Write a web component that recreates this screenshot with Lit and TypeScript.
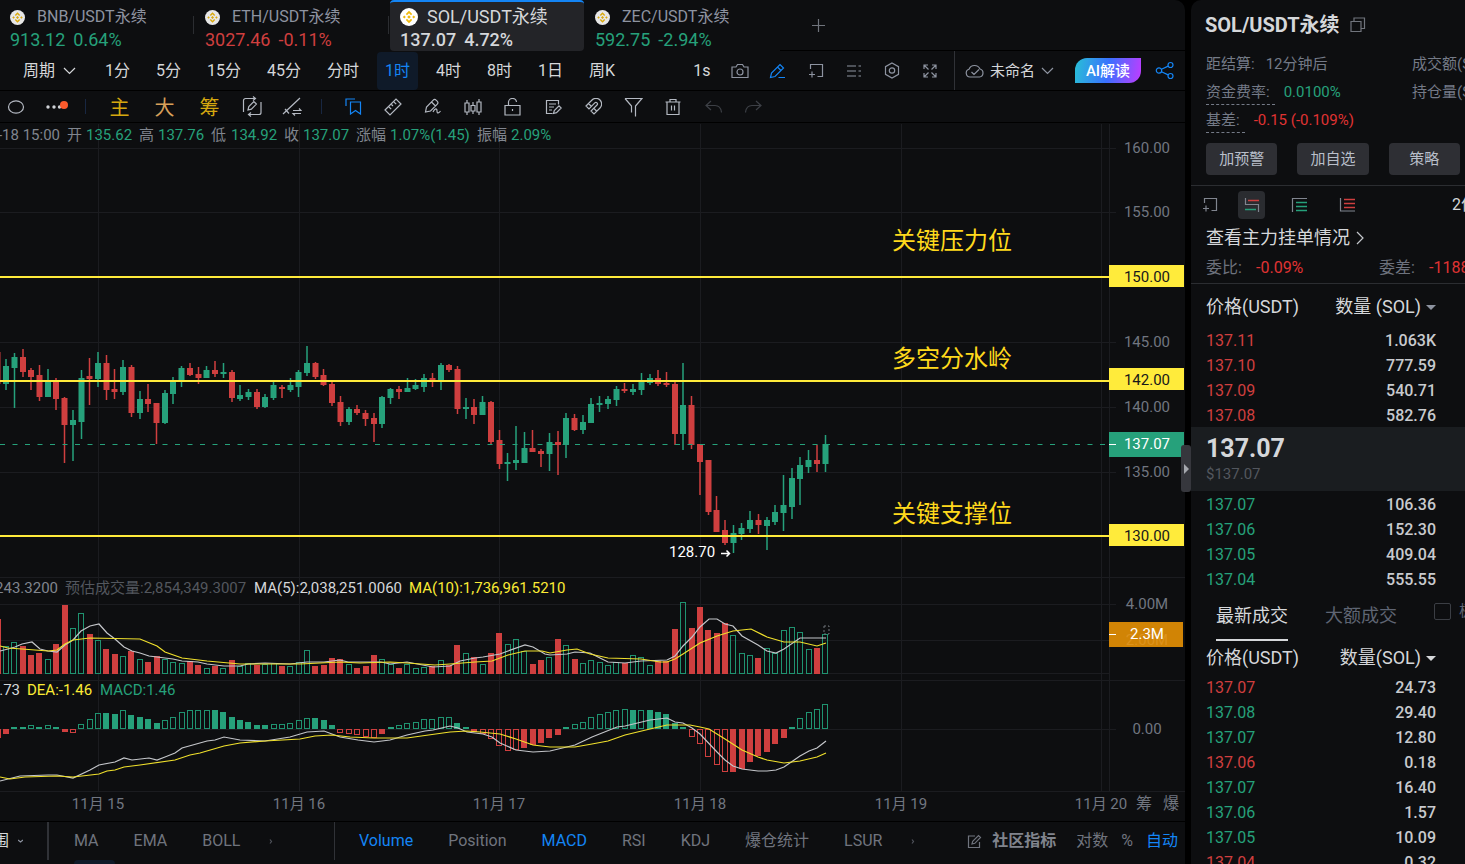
import { LitElement, html, svg, css, type SVGTemplateResult } from "lit";
import { customElement, state } from "lit/decorators.js";
import { classMap } from "lit/directives/class-map.js";

/* ---------- chart data: vertical positions inside the 698px tall canvas, offset by TOP ---------- */

const TOP = 123;
const STEP = 8.36;
const FIRST = -12;
const xOf = (i: number) => 98 + (i + FIRST) * STEP;

// direction, high, body top, body bottom, low
type Candle = ["r" | "g", number, number, number, number];
const CANDLES: Candle[] = [
  ["r", 351, 352, 384, 384], ["g", 359, 366, 384, 390], ["g", 353, 357, 368, 408], ["r", 349, 357, 372, 377],
  ["r", 368, 370, 377, 390], ["r", 365, 375, 397, 401], ["g", 369, 381, 397, 397], ["r", 378, 381, 399, 410],
  ["r", 397, 398, 425, 463], ["g", 410, 420, 425, 461], ["g", 370, 378, 422, 439], ["r", 358, 376, 379, 405],
  ["g", 352, 363, 379, 387], ["r", 355, 363, 390, 400], ["r", 369, 389, 392, 399], ["g", 360, 367, 392, 395],
  ["r", 365, 367, 413, 417], ["g", 391, 399, 413, 419], ["r", 384, 399, 404, 412], ["r", 403, 403, 423, 444],
  ["g", 390, 393, 423, 424], ["g", 377, 381, 394, 404], ["g", 366, 368, 381, 387], ["r", 363, 368, 375, 376],
  ["r", 367, 374, 378, 384], ["g", 366, 370, 378, 378], ["r", 361, 370, 374, 377], ["g", 363, 372, 374, 378],
  ["r", 370, 372, 398, 402], ["g", 385, 395, 399, 401], ["g", 389, 392, 397, 400], ["r", 389, 392, 407, 409],
  ["g", 394, 397, 407, 408], ["g", 381, 385, 398, 400], ["r", 385, 387, 389, 398], ["g", 378, 385, 390, 392],
  ["g", 370, 372, 387, 397], ["g", 346, 363, 373, 376], ["r", 362, 363, 377, 379], ["r", 369, 375, 385, 386],
  ["r", 381, 384, 403, 406], ["r", 396, 402, 422, 426], ["g", 407, 409, 422, 425], ["r", 405, 409, 413, 415],
  ["r", 410, 413, 419, 426], ["r", 413, 418, 424, 442], ["g", 396, 397, 424, 428], ["g", 388, 389, 398, 404],
  ["r", 386, 389, 392, 399], ["g", 378, 388, 392, 392], ["g", 379, 385, 389, 390], ["g", 374, 378, 387, 392],
  ["r", 373, 378, 381, 387], ["g", 363, 365, 381, 390], ["r", 364, 365, 370, 372], ["r", 366, 369, 409, 414],
  ["g", 398, 407, 409, 419], ["r", 399, 407, 415, 424], ["g", 396, 402, 415, 415], ["r", 401, 402, 442, 445],
  ["r", 430, 440, 464, 469], ["g", 453, 462, 464, 481], ["g", 426, 460, 463, 470], ["g", 432, 448, 463, 463],
  ["r", 430, 448, 452, 452], ["r", 449, 451, 454, 467], ["g", 433, 442, 454, 471], ["r", 431, 442, 445, 475],
  ["g", 413, 418, 445, 458], ["r", 414, 418, 430, 431], ["g", 415, 422, 430, 434], ["g", 398, 404, 423, 423],
  ["g", 396, 403, 405, 412], ["g", 396, 399, 404, 409], ["g", 386, 389, 400, 406], ["r", 383, 389, 391, 393],
  ["g", 384, 389, 392, 395], ["g", 373, 381, 390, 395], ["g", 374, 378, 383, 385], ["r", 370, 378, 384, 386],
  ["r", 372, 383, 385, 387], ["r", 381, 384, 434, 445], ["g", 363, 405, 434, 450], ["r", 396, 405, 445, 449],
  ["r", 444, 444, 462, 495], ["r", 460, 460, 512, 515], ["r", 496, 510, 532, 532], ["r", 520, 530, 543, 545],
  ["g", 525, 533, 543, 553], ["g", 523, 528, 534, 540], ["g", 511, 520, 529, 533], ["r", 514, 520, 525, 534],
  ["g", 517, 520, 526, 550], ["g", 505, 512, 522, 525], ["g", 475, 505, 513, 531], ["g", 468, 478, 507, 519],
  ["g", 457, 465, 479, 505], ["g", 450, 460, 467, 473], ["r", 445, 460, 464, 472], ["g", 435, 444, 464, 472],
];

// top edge of every volume column
const VOLUME = [
  619, 646, 642, 646, 655, 653, 659, 644, 605, 628, 613, 634, 640, 649, 654, 656, 651, 659, 662, 656,
  659, 662, 663, 661, 665, 668, 666, 668, 660, 666, 663, 665, 664, 663, 666, 666, 662, 650, 666, 665,
  658, 659, 664, 668, 666, 655, 659, 664, 668, 664, 668, 667, 666, 660, 665, 645, 653, 657, 664, 653,
  633, 644, 639, 651, 664, 660, 657, 639, 645, 659, 663, 660, 662, 665, 662, 663, 655, 657, 665, 661,
  661, 629, 602, 628, 607, 630, 633, 623, 635, 653, 655, 658, 648, 653, 630, 627, 632, 649, 648, 634,
];

// signed height from the zero line; "h" marks a hollow (growing) column
const MACD = (
  "-9 -5 2 2 4h 2 4h 2 -3 -4h 5h 10h 16h 16 15 19h 14 12 10 6 9h 12h 17h 19h 19h 19h 19 17 12 9 7 4 4 5h 5h 6h 9h 11h " +
  "11 9 4 -4h -5h -6h -8h -9h -5 2 4h 6h 7h 10h 10h 12h 12h 6 2 -3 -5h -10h -17h -22h -21h -19 -16 -14 -9 -6 2 5h 7h " +
  "12h 15h 17h 19h 20h 19 19h 19 17 15 6 2 -8h -15h -28h -36h -43h -43 -40 -33 -27 -23 -15 -9 2 11h 17h 20h 25h"
).split(" ");

const VOL_MA5 =
  "0,651 8,649 15,647 22,644 32,642 40,649 48,651 57,652 65,645 73,640 81,631 90,626 99,624 107,633 115,639 124,647 132,651 140,653 149,656 157,657 173,659 182,661 198,662 207,664 224,666 240,666 248,664 265,663 290,664 307,662 324,662 340,660 348,662 381,662 390,664 407,662 433,667 450,666 460,661 475,658 483,657 500,654 508,651 525,645 533,647 545,654 550,655 567,654 575,652 590,653 600,658 608,662 625,663 641,661 667,660 675,656 683,646 692,637 700,627 709,619 717,619 725,624 733,626 742,636 758,645 767,651 776,653 784,649 800,638 826,638";
const VOL_MA10 =
  "0,646 8,648 22,649 48,651 57,650 65,644 73,640 90,638 140,639 157,646 165,652 182,658 207,661 240,664 300,664 340,662 360,663 390,662 407,663 435,665 450,664 475,662 492,661 508,655 525,651 542,651 550,653 567,650 577,649 590,654 608,658 641,659 660,662 667,662 675,659 683,654 700,643 717,636 733,631 751,629 767,637 784,642 800,642 817,646 826,643";
const DIF =
  "0,781 20,776 48,775 57,775 73,778 90,770 99,765 115,762 124,758 132,760 149,758 157,760 165,757 175,753 182,748 207,741 215,740 224,737 240,740 265,741 290,737 307,732 324,731 340,737 358,740 374,742 390,740 407,735 425,731 433,730 450,726 458,728 467,732 483,734 492,737 500,743 516,750 533,752 550,751 575,745 592,737 617,727 625,726 650,720 667,718 675,722 683,723 692,728 700,734 717,752 725,760 733,766 742,769 758,771 767,771 776,770 784,767 800,756 809,751 817,748 826,741";
const DEA =
  "0,777 10,779 25,777 57,776 73,777 82,776 99,774 107,771 115,770 124,767 140,765 175,760 190,755 200,753 224,746 240,743 265,741 300,739 315,736 332,735 350,737 374,738 407,738 450,732 467,731 480,732 500,734 516,739 533,745 550,747 575,747 592,744 608,741 625,735 650,729 667,725 690,725 700,727 709,729 725,739 742,750 758,757 767,760 784,763 800,761 817,757 826,753";

const DAYS: [number, string][] = [[98, "11月 15"], [299, "11月 16"], [499, "11月 17"], [700, "11月 18"], [901, "11月 19"], [1101, "11月 20"]];

/* ---------- icons ---------- */

const ico = (w: number, h: number, body: SVGTemplateResult, cls = "") =>
  html`<svg class="ico ${cls}" width=${w} height=${h} viewBox="0 0 ${w} ${h}" aria-hidden="true">${body}</svg>`;

const ICONS = {
  coin: svg`<circle cx="9" cy="9" r="9" fill="#fff" stroke="none"/><g fill="#f0b90b" stroke="none"><path d="M9 2.800l3.200 3.200-1.200 1.200L9 5.200 7 7.200 5.800 6z"/><path d="M9 15.200l3.200-3.200-1.200-1.200L9 12.800l-2-2L5.800 12z"/><path d="M9 7.200L10.800 9 9 10.800 7.200 9z"/><path d="M4.300 7.500L5.800 9l-1.500 1.500L2.800 9z"/><path d="M13.700 7.500L15.200 9l-1.500 1.500L12.200 9z"/></g>`,
  chev: svg`<path d="M1 1l5.500 5.500L12 1"/>`,
  camera: svg`<path d="M1 4h4l1.500-2.500h5L13 4h4v10.500H1z"/><circle cx="9" cy="9" r="3"/>`,
  pen: svg`<path d="M1.500 14.500l1-4.500L11 1.500l3.500 3.500L6 13.500zM8.500 4l3.500 3.500M9.500 14.500H16"/>`,
  addPane: svg`<path d="M2.500 6V1.500h12v12H9.500M4 8.500v6M1 11.500h6"/>`,
  list: svg`<path d="M1 2h9M1 7h9M1 12h9M12.500 2H15M12.500 7H15M12.500 12H15"/>`,
  hex: svg`<path d="M8 1l6.500 3.700v7.600L8 16l-6.500-3.700V4.700z"/><circle cx="8" cy="8.500" r="2.700"/>`,
  expand: svg`<path d="M1 5V1h4M1 1l4.500 4.500M9 1h4v4M13 1L8.500 5.500M1 9v4h4M1 13l4.500-4.500M13 9v4H9M13 13L8.500 8.500"/>`,
  cloud: svg`<path d="M5 14a4 4 0 0 1-1-7.800A6 6 0 0 1 15 6a4.100 4.100 0 0 1-.5 8zM6.500 9l2.500 2.500 5-5"/>`,
  share: svg`<circle cx="4" cy="9.500" r="2.700"/><circle cx="15.500" cy="4" r="2.500"/><circle cx="15.500" cy="15" r="2.500"/><path d="M6.500 8.300l6.700-3.200M6.500 10.700l6.700 3.200"/>`,
  ellipse: svg`<ellipse cx="9" cy="8" rx="7.500" ry="6.200"/>`,
  dots: svg`<g fill="#d0d3d8" stroke="none"><circle cx="3" cy="8" r="1.700"/><circle cx="9" cy="8" r="1.700"/><circle cx="14.500" cy="8" r="1.700"/></g><circle cx="19" cy="6" r="4" fill="#fb5a2c" stroke="none"/>`,
  editLoop: svg`<path d="M1.500 16V4.500a2 2 0 0 1 2-2H13M11 .5l2.500 2-2.500 2M19 6v10.500a2 2 0 0 1-2 2H7M9 16.500l-2.500 2 2.500 2M6 14l.8-3.500 5-5 2.600 2.600-5 5z"/>`,
  lineSwap: svg`<path d="M1 17L18 1M3 12l4 4.500M11 13.500h8l-2-2M19 16.500h-8l2 2"/>`,
  bookmark: svg`<path d="M1 8V1h9M5.500 4h10v12l-5-3.500-5 3.500z"/>`,
  ruler: svg`<path d="M1 12L12 1l5 5L6 17zM5 9l2.200 2.200M7.500 6.500l1.500 1.500M10 4l2.200 2.200"/>`,
  marker: svg`<path d="M1.500 14l1-5L9 2.300c1-1 2.300-1 3.300 0l.8.800c1 1 1 2.300 0 3.300L6.500 13zM7.500 4l4 4M9 14c2-4 4-4 4-1s2 2 3.500 0"/>`,
  bars: svg`<path d="M3 1v3M3 13v3M1 4h4v9H1zM9 3v3.500M9 12v3M7 6.500h4V12H7zM15 0v3M15 13v3M13 3h4v10h-4z"/>`,
  lock: svg`<path d="M1 7.500h15v9.500H1zM4.500 7.500V5a4 4 0 0 1 8-1M8.500 11v2"/>`,
  note: svg`<path d="M13.500 5.500v-4h-12v13h6M4 5h7M4 8h5M4 11h3M8.500 14.500l.8-3 4.700-4.700 2.200 2.200-4.700 4.700z"/>`,
  magnet: svg`<path d="M2 8l6-6a5.500 5.500 0 0 1 8 8l-6 6-3-3 6-6a1.500 1.500 0 0 0-2.200-2.200L5 11zM4.500 5.500l3 3M13 13.500l-3-3"/>`,
  funnel: svg`<path d="M1 1.500h17L11.500 9v10.500M1 1.500L7.500 9v6.500"/>`,
  trash: svg`<path d="M.5 4h15M2 4v12.500h12V4M5 4V1.500h6V4M6.500 7.500v5M9.500 7.500v5"/>`,
  undo: svg`<path d="M6 1L1 5.500 6 10M1 5.500h9c4 0 6 2.500 6.500 7"/>`,
  redo: svg`<path d="M11 1l5 4.500-5 4.500M16 5.500H7C3 5.500 1 8 .5 12.500"/>`,
  compose: svg`<path d="M8 2H1.500v11.500h11V8M5 10l.7-2.800L11.500 1.500l2 2L7.800 9.300z"/>`,
  copy: svg`<path d="M1 4.500h10v10H1zM4 4.500V1h10.500v10.500H11"/>`,
  more: svg`<path d="M1 1.500l1.500 2L1 5.500"/>`,
  bookBoth: svg`<path d="M1.500 1v6.500h13V15"/><path d="M4 3.500h11" stroke="#cf3f3f" stroke-width="1.600"/><path d="M1 12.500h11" stroke="#26a17b" stroke-width="1.600"/>`,
  bookBuy: svg`<path d="M1.500 15V1.500H16"/><path d="M5 5.500h11M5 9.500h11M5 13.500h11" stroke="#26a17b" stroke-width="1.600"/>`,
  bookSell: svg`<path d="M1.500 1v13H16"/><path d="M5 2.500h11M5 6.500h11M5 10.500h11" stroke="#cf3f3f" stroke-width="1.600"/>`,
};

const PAIRS = [
  { name: "BNB/USDT永续", price: "913.12", change: "0.64%", tone: "up" },
  { name: "ETH/USDT永续", price: "3027.46", change: "-0.11%", tone: "down" },
  { name: "SOL/USDT永续", price: "137.07", change: "4.72%", tone: "on" },
  { name: "ZEC/USDT永续", price: "592.75", change: "-2.94%", tone: "up" },
];
const PERIODS = ["1分", "5分", "15分", "45分", "分时", "1时", "4时", "8时", "1日", "周K"];
const ASKS = [["137.11", "1.063K"], ["137.10", "777.59"], ["137.09", "540.71"], ["137.08", "582.76"]];
const BIDS = [["137.07", "106.36"], ["137.06", "152.30"], ["137.05", "409.04"], ["137.04", "555.55"]];
const TRADES = [
  ["137.07", "24.73", "down"], ["137.08", "29.40", "up"], ["137.07", "12.80", "up"], ["137.06", "0.18", "down"],
  ["137.07", "16.40", "up"], ["137.06", "1.57", "up"], ["137.05", "10.09", "up"], ["137.04", "0.32", "down"],
];

/* ---------- price chart ---------- */

@customElement("price-chart")
export class PriceChart extends LitElement {
  static styles = css`
    :host { display: block; height: 698px; min-width: 0; }
    svg { display: block; width: 100%; height: 100%; font: 15px Roboto, "Noto Sans CJK SC", sans-serif; }
    .grid { stroke: #1b1c20; stroke-width: 1; shape-rendering: crispEdges; }
    .g { fill: #26a17b; } .r { fill: #cf3f3f; }
    .gs { fill: none; stroke: #1f9370; } .rs { fill: none; stroke: #cf3f3f; }
    .lvl { stroke: #ffeb3b; stroke-width: 2; }
    .note { font-size: 24px; fill: #ffd91c; }
    .ax { fill: #717680; }
    .dim { fill: #53575e; }
    .lab { fill: #80858e; }
    .val { fill: #26a17b; }
    .lit { fill: #d5d7da; }
    .yel { fill: #fbeb35; }
    .dark { fill: #17181a; }
    .white { fill: #fff; }
    .line { fill: none; stroke-width: 1.2; stroke: #c4c6ca; }
    .line.y { stroke: #f0e02c; }
  `;

  private column(x: number, y: number, h: number, tone: string, hollow: boolean) {
    return hollow && h > 2
      ? svg`<rect class="${tone}s" x=${x - 2.5} y=${y + 0.5} width="5" height=${h - 1}/>`
      : svg`<rect class=${tone} x=${x - 3} y=${y} width="6" height=${h}/>`;
  }

  render() {
    return html`<svg role="img" aria-label="SOL/USDT 1时 K线图">
      <g transform="translate(0 ${-TOP})">
        ${[148, 212, 342, 407, 472, 604, 640, 673, 729].map((y) => svg`<line class="grid" x1="0" x2="100%" y1=${y} y2=${y}/>`)}
        ${DAYS.map(([x]) => svg`<line class="grid" x1=${x} x2=${x} y1="124" y2="791"/>`)}
        ${CANDLES.map(([t, hi, a, b, lo], i) => {
          const x = Math.round(xOf(i) * 2) / 2;
          return svg`<rect class=${t} x=${x - 0.75} y=${hi} width="1.5" height=${lo - hi}/><rect class=${t} x=${x - 3} y=${a} width="6" height=${b - a}/>`;
        })}
        ${VOLUME.map((y, i) => this.column(Math.round(xOf(i)), y, 674 - y, CANDLES[i][0], CANDLES[i][0] === "g"))}
        <rect x="824" y="626" width="5" height="8" fill="none" stroke="#70747b" stroke-dasharray="2 2"/>
        ${MACD.map((m, i) => {
          const v = parseInt(m, 10);
          return this.column(Math.round(xOf(i)), v > 0 ? 729 - v : 729, Math.abs(v), v > 0 ? "g" : "r", m.endsWith("h"));
        })}
        <polyline class="line" points=${VOL_MA5}/><polyline class="line y" points=${VOL_MA10}/>
        <polyline class="line" points=${DIF}/><polyline class="line y" points=${DEA}/>
        <line x1="0" x2="100%" y1="444.5" y2="444.5" stroke="#26a17b" stroke-dasharray="5 7.500"/>
        ${[277, 381, 536].map((y) => svg`<line class="lvl" x1="0" x2="100%" y1=${y} y2=${y}/>`)}
        <text class="note" x="892" y="249">关键压力位</text>
        <text class="note" x="892" y="367">多空分水岭</text>
        <text class="note" x="892" y="522">关键支撑位</text>
        <text class="white" x="669" y="557">128.70</text>
        <path d="M721 553.500h8M726.500 550.500l3 3-3 3" stroke="#fff" stroke-width="1.500" fill="none"/>
        <text y="140"><tspan class="lab" x="60" text-anchor="end">2025-11-18 15:00</tspan></text>
        <text y="140" class="lab"><tspan x="67">开</tspan><tspan x="139">高</tspan><tspan x="211">低</tspan><tspan x="284">收</tspan><tspan x="356">涨幅</tspan><tspan x="477">振幅</tspan></text>
        <text y="140" class="val"><tspan x="86">135.62</tspan><tspan x="158">137.76</tspan><tspan x="231">134.92</tspan><tspan x="303">137.07</tspan><tspan x="390">1.07%(1.45)</tspan><tspan x="511">2.09%</tspan></text>
        <text y="593"><tspan class="lab" x="58" text-anchor="end">成交量:2,339,243.3200</tspan></text>
        <text y="593"><tspan class="dim" x="65">预估成交量:2,854,349.3007</tspan><tspan class="lit" x="254">MA(5):2,038,251.0060</tspan><tspan class="yel" x="409">MA(10):1,736,961.5210</tspan></text>
        <text y="695"><tspan class="lit" x="20" text-anchor="end">DIF:-0.73</tspan></text>
        <text y="695"><tspan class="yel" x="27">DEA:-1.46</tspan><tspan class="val" x="100">MACD:1.46</tspan></text>
      </g>
      <svg x="100%" y="0" overflow="visible">
        <g transform="translate(-76 ${-TOP})">
          <rect x="0" y="123" width="76" height="668" fill="#0d0e10"/>
          <line class="grid" x1="0" x2="0" y1="124" y2="791"/>
          ${[148, 212, 342, 407, 472, 604, 640, 729].map((y) => svg`<line class="grid" x1="0" x2="7" y1=${y} y2=${y}/>`)}
        </g>
      </svg>
      <g transform="translate(0 ${-TOP})">
        ${[577, 680, 791].map((y) => svg`<line class="grid" x1="0" x2="100%" y1=${y} y2=${y}/>`)}
        ${DAYS.map(([x, d]) => svg`<text class="ax" x=${x} y="809" text-anchor="middle">${d}</text>`)}
      </g>
      <svg x="100%" y="0" overflow="visible">
        <g transform="translate(-76 ${-TOP})" text-anchor="middle">
          ${([[153, "160.00"], [217, "155.00"], [347, "145.00"], [412, "140.00"], [477, "135.00"], [609, "4.00M"], [734, "0.00"]] as [number, string][]).map(
            ([y, t]) => svg`<text class="ax" x="38" y=${y}>${t}</text>`)}
          ${([[265, "150.00"], [368, "142.00"], [524, "130.00"]] as [number, string][]).map(
            ([y, t]) => svg`<rect x="0" y=${y} width="75" height="22" fill="#ffeb3b"/><text class="dark" x="38" y=${y + 17}>${t}</text>`)}
          <rect x="0" y="432" width="75" height="25" fill="#26a17b"/>
          <path d="M0 444.500h7" stroke="#fff"/><text class="white" x="38" y="449">137.07</text>
          <rect x="0" y="622" width="74" height="25" fill="#d18405"/>
          <text x="38" y="645" fill="#dc921d">2.00M</text>
          <path d="M0 634.500h7" stroke="#fff"/><text class="white" x="38" y="639">2.3M</text>
          <text class="ax" x="35" y="809" font-size="16">筹</text><text class="ax" x="62" y="809" font-size="16">爆</text>
        </g>
      </svg>
    </svg>`;
  }
}

/* ---------- page ---------- */

@customElement("app-root")
export class AppRoot extends LitElement {
  @state() private period = "1时";

  static styles = css`
    :host {
      display: flex; gap: 6px; height: 100vh; overflow: hidden; background: #000; color: #d5d7da; position: relative;
      font: 16px/20px Roboto, "Noto Sans CJK SC", sans-serif; white-space: nowrap;
    }
    * { box-sizing: border-box; }
    button { font: inherit; color: inherit; background: none; border: 0; padding: 0; cursor: pointer; white-space: nowrap; }
    a { color: inherit; text-decoration: none; }
    .ico { display: block; flex: none; fill: none; stroke: currentColor; stroke-width: 1.2; }
    .up { color: #26a17b; } .down { color: #cf3f3f; }
    .left { flex: 1; min-width: 0; background: #0d0e10; border-radius: 0 10px 0 0; display: flex; flex-direction: column; overflow: hidden; }

    .pairs { display: flex; height: 51px; }
    .pair { width: 195px; padding: 6px 0 0 10px; text-align: left; color: #8d93a0; position: relative; }
    .pair::after { content: ""; position: absolute; right: 1px; top: 16px; height: 18px; width: 1px; background: #2b2d31; }
    .pair:nth-child(n + 3)::after { display: none; }
    .pair.sel { background: #232428; border-top: 2px solid #1485f5; border-radius: 4px; color: #d5d7da; padding-top: 4px; width: 194px; margin-right: 1px; font-size: 18px; }
    .nm { display: flex; align-items: center; gap: 12px; height: 22px; }
    .nm .ico { width: 15px; height: 15px; opacity: 0.9; }
    .sel .nm { gap: 9px; } .sel .nm .ico { width: 18px; height: 18px; opacity: 1; }
    .pr { display: flex; gap: 8px; font-size: 18px; line-height: 24px; }
    .sel .pr { font-weight: 500; color: #d5d7da; }
    .plus { flex: 1; border-bottom: 1px solid #000; display: flex; align-items: center; padding-left: 32px; color: #70747c; }

    .bar { display: flex; align-items: center; border-bottom: 1px solid #000; }
    .times { height: 40px; padding-right: 2px; gap: 10px; }
    .times > button { height: 38px; padding: 0 8px; border-radius: 4px; }
    .times > button.cur { background: #0f1a29; color: #1485f5; }
    .times .cyc { display: flex; align-items: center; gap: 8px; padding: 0 11px 0 23px; }
    .tools { display: flex; align-items: center; margin-left: auto; color: #8d93a0; }
    .tools button { width: 38px; display: flex; justify-content: center; }
    .tools .sec { color: #d5d7da; }
    .tools .blue, .blue { color: #1485f5; }
    .doc { display: flex; align-items: center; gap: 6px; height: 39px; border-left: 1px solid #303237; margin-left: 5px; padding: 0 21px 0 10px; font-size: 15px; color: #8d93a0; }
    .doc span { color: #d5d7da; }
    .tools .ai { width: 66px; height: 25px; align-items: center; border-radius: 12px 0 12px 0; font-size: 15px; font-weight: 500; color: #fff; background: linear-gradient(100deg, #28c0d6, #3a70ff 50%, #c13cff); margin-right: 4px; }

    .draw { height: 32px; color: #b4b9c2; }
    .draw button { width: 40px; display: flex; justify-content: center; }
    .draw .first { width: 32px; } .draw .dots { width: 50px; }
    .draw .cjk { width: 45px; font-size: 20px; line-height: 20px; color: #d5a80f; padding-top: 3px; }
    .draw .org { color: #d8a05a; }
    .draw .off { color: #3d4046; }
    .sep { width: 1px; height: 15px; background: #182742; margin: 0 11px 0 3px; }
    .sep.wide { margin: 0 11px 0 9px; }

    .inds { display: flex; align-items: flex-start; color: #70747e; border-top: 1px solid #000; padding-right: 7px; }
    .inds > div { display: flex; align-items: center; gap: 35px; height: 38px; }
    .inds .cut { width: 49px; gap: 9px; border-right: 2px solid #303237; color: #d5d7da; }
    .cut span { width: 9px; overflow: hidden; direction: rtl; }
    .cut .ico { color: #8d93a0; }
    .inds .main { padding-left: 25px; width: 286px; border-right: 1px solid #303237; }
    .inds .sub { padding-left: 24px; }
    .nxt { color: #50545c; margin-left: -6px; }
    .inds .tail { margin-left: auto; gap: 10px; }
    .tail b { font-weight: 700; color: #80848d; padding-right: 10px; }
    .tail button + button { padding-left: 3px; }
    .inds .sel { color: #1485f5; }
    .under { flex: 1; padding-left: 74px; min-height: 0; overflow: hidden; }
    .under i { display: block; width: 41px; height: 30px; border-radius: 4px; background: #0f1a29; }

    .fold { position: absolute; left: calc(100% - 284px); top: 445px; width: 10px; height: 47px; background: #36373d; border-radius: 3px; display: flex; align-items: center; justify-content: flex-end; padding-right: 2px; }
    .fold i { border: 5px solid transparent; border-left-color: #a5a8ae; border-right: 0; }

    .right { width: 274px; flex: none; background: #0d0e10; border-radius: 10px 0 0 0; overflow: hidden; }
    h1 { margin: 0; padding-left: 14px; height: 50px; display: flex; align-items: center; gap: 10px; font-size: 20px; font-weight: 700; color: #d5d7da; }
    h1 .ico { color: #70747c; }
    dl { margin: 0; padding-left: 15px; font-size: 15px; color: #747a87; display: grid; grid-template-columns: 206px auto; }
    dl > div { height: 28px; display: flex; align-items: center; gap: 11px; }
    dt { border-bottom: 1px dashed transparent; line-height: 24px; }
    dt.tip { border-color: #747a87; padding-right: 5px; margin-right: -2px; }
    dd { margin: 0; }
    dd.green { color: #26a17b; } .neg { color: #e03333; }
    .acts { display: flex; gap: 20px; padding: 9px 5px 10px 15px; border-bottom: 1px solid #2b2d31; }
    .acts button { flex: 1; height: 32px; border-radius: 4px; background: #2e2f34; font-size: 15px; color: #b9bfca; }
    .views { display: flex; align-items: center; height: 38px; padding-left: 5px; gap: 21px; color: #80858f; }
    .views button { width: 27px; height: 28px; flex: none; border-radius: 4px; display: flex; align-items: center; justify-content: center; }
    .views .on { background: #2a2c30; }
    .views .unit { color: #d5d7da; margin-left: 70px; width: auto; }
    .views button:first-child { margin-right: -6px; }
    .flow { display: flex; align-items: center; gap: 6px; height: 28px; padding-left: 15px; font-size: 18px; }
    .flow .ico { color: #c4c7cc; }
    .ratio { display: flex; height: 32px; align-items: center; padding-left: 15px; border-bottom: 1px solid #2b2d31; color: #6d727d; }
    .ratio span { width: 50px; flex: none; } .ratio .neg { width: 123px; }
    table { border-collapse: collapse; width: 245px; table-layout: fixed; }
    th, td { padding: 2px 0 0; height: 25px; }
    th { font-weight: 400; font-size: 18px; height: 43px; text-align: right; }
    .trades th { height: 33px; padding: 0; }
    th:first-child, td:first-child { text-align: left; padding-left: 15px; }
    td:last-child { text-align: right; font-weight: 500; color: #c8cace; }
    .tri { display: inline-block; border: 5px solid transparent; border-top-color: #8d93a0; border-bottom: 0; margin-left: 5px; vertical-align: 3px; }
    .trades .tri { border-top-color: #d5d7da; }
    .last { height: 64px; background: #1a1d20; padding: 9px 15px; font-size: 15px; color: #53575e; line-height: 24px; }
    .last strong { display: block; font-size: 25px; line-height: 26px; font-weight: 700; color: #d5d7da; }
    .feeds { display: flex; align-items: center; height: 50px; padding-left: 25px; font-size: 18px; color: #5f6573; }
    .feeds button { height: 50px; margin-right: 37px; border-bottom: 2px solid transparent; padding-top: 2px; }
    .feeds .on { color: #d5d7da; border-color: #d5d7da; }
    .feeds label { display: flex; align-items: center; gap: 8px; font-size: 15px; padding-bottom: 10px; }
    .feeds input { appearance: none; width: 17px; height: 17px; margin: 0; border: 1px solid #3b3e44; border-radius: 2px; flex: none; }
  `;

  private tool(icon: SVGTemplateResult, label: string, w = 18, h = 18, cls = "") {
    return html`<button class=${cls} aria-label=${label}>${ico(w, h, icon)}</button>`;
  }

  private rows(list: string[][], tone: string) {
    return list.map(([p, q, t]) => html`<tr><td class=${t ?? tone}>${p}</td><td>${q}</td></tr>`);
  }

  render() {
    const t = this.tool.bind(this);
    return html`
      <main class="left">
        <nav class="pairs">
          ${PAIRS.map((p) => html`<button class="pair ${p.tone === "on" ? "sel" : ""}">
            <div class="nm"><svg class="ico" viewBox="0 0 18 18" aria-hidden="true">${ICONS.coin}</svg><span>${p.name}</span></div>
            <div class="pr ${p.tone}"><span>${p.price}</span><span>${p.change}</span></div>
          </button>`)}
          <button class="plus" aria-label="添加">${ico(13, 13, svg`<path d="M6.500 0v13M0 6.500h13"/>`)}</button>
        </nav>
        <div class="bar times">
          <button class="cyc">周期 ${ico(13, 8, ICONS.chev)}</button>
          ${PERIODS.map((p) => html`<button class=${classMap({ cur: p === this.period })} @click=${() => (this.period = p)}>${p}</button>`)}
          <div class="tools">
            <button class="sec">1s</button>
            ${t(ICONS.camera, "截图", 18, 16)}${t(ICONS.pen, "画线", 17, 16, "blue")}${t(ICONS.addPane, "新窗口", 16, 16)}
            ${t(ICONS.list, "列表", 16, 14)}${t(ICONS.hex, "设置", 16, 17)}${t(ICONS.expand, "全屏", 14, 14)}
            <div class="doc">${ico(19, 16, ICONS.cloud)}<span>未命名</span>${ico(13, 8, ICONS.chev)}</div>
            <button class="ai">AI解读</button>
            ${t(ICONS.share, "分享", 19, 19, "blue")}
          </div>
        </div>
        <div class="bar draw">
          ${t(ICONS.ellipse, "椭圆", 18, 16, "first")}${t(ICONS.dots, "更多", 24, 16, "dots")}
          <span class="sep"></span>
          <button class="cjk">主</button><button class="cjk org">大</button><button class="cjk">筹</button>
          ${t(ICONS.editLoop, "编辑", 20, 21)}${t(ICONS.lineSwap, "切换", 20, 19)}
          <span class="sep wide"></span>
          ${t(ICONS.bookmark, "书签", 17, 17, "blue")}${t(ICONS.ruler, "测量")}${t(ICONS.marker, "画笔")}${t(ICONS.bars, "K线", 18, 16)}
          ${t(ICONS.lock, "锁定")}${t(ICONS.note, "备注", 17, 16)}${t(ICONS.magnet, "磁吸")}${t(ICONS.funnel, "筛选", 19, 20)}
          ${t(ICONS.trash, "删除", 16, 18)}${t(ICONS.undo, "撤销", 17, 14, "off")}${t(ICONS.redo, "重做", 17, 14, "off")}
        </div>
        <price-chart></price-chart>
        <div class="inds">
          <div class="cut"><span>范围</span>${ico(5, 4, svg`<path d="M0 1l2.500 2L5 1"/>`)}</div>
          <div class="main"><button>MA</button><button>EMA</button><button>BOLL</button>${ico(4, 7, ICONS.more, "nxt")}</div>
          <div class="sub">
            <button class="sel">Volume</button><button>Position</button><button class="sel">MACD</button><button>RSI</button>
            <button>KDJ</button><button>爆仓统计</button><button>LSUR</button>${ico(4, 7, ICONS.more, "nxt")}
          </div>
          <div class="tail">${ico(15, 15, ICONS.compose)}<b>社区指标</b><button>对数</button><button>%</button><button class="sel">自动</button></div>
        </div>
        <div class="under"><i></i></div>
      </main>
      <aside class="right">
        <h1>SOL/USDT永续 ${ico(16, 16, ICONS.copy)}</h1>
        <dl>
          <div><dt>距结算:</dt><dd>12分钟后</dd></div><div><dt>成交额(SOL):</dt></div>
          <div><dt class="tip">资金费率:</dt><dd class="green">0.0100%</dd></div><div><dt>持仓量(SOL):</dt></div>
          <div><dt class="tip">基差:</dt><dd class="neg">-0.15 (-0.109%)</dd></div>
        </dl>
        <div class="acts"><button>加预警</button><button>加自选</button><button>策略</button></div>
        <div class="views">
          ${t(ICONS.addPane, "新窗口", 16, 16)}${t(ICONS.bookBoth, "买卖盘", 16, 16, "on")}${t(ICONS.bookBuy, "买盘", 17, 16)}${t(ICONS.bookSell, "卖盘", 17, 16)}
          <button class="unit">2位小数</button>
        </div>
        <a class="flow" href="#">查看主力挂单情况 ${ico(8, 14, svg`<path d="M1 1l6 6-6 6"/>`)}</a>
        <div class="ratio"><span>委比:</span><span class="neg">-0.09%</span><span>委差:</span><span class="neg">-1188.59</span></div>
        <table>
          <thead><tr><th>价格(USDT)</th><th>数量 (SOL)<i class="tri"></i></th></tr></thead>
          <tbody>${this.rows(ASKS, "down")}</tbody>
        </table>
        <div class="last"><strong>137.07</strong>$137.07</div>
        <table><tbody>${this.rows(BIDS, "up")}</tbody></table>
        <div class="feeds">
          <button class="on">最新成交</button><button>大额成交</button>
          <label><input type="checkbox" />极速</label>
        </div>
        <table class="trades">
          <thead><tr><th>价格(USDT)</th><th>数量(SOL)<i class="tri"></i></th></tr></thead>
          <tbody>${this.rows(TRADES, "up")}</tbody>
        </table>
      </aside>
      <button class="fold" aria-label="收起"><i></i></button>
    `;
  }
}
